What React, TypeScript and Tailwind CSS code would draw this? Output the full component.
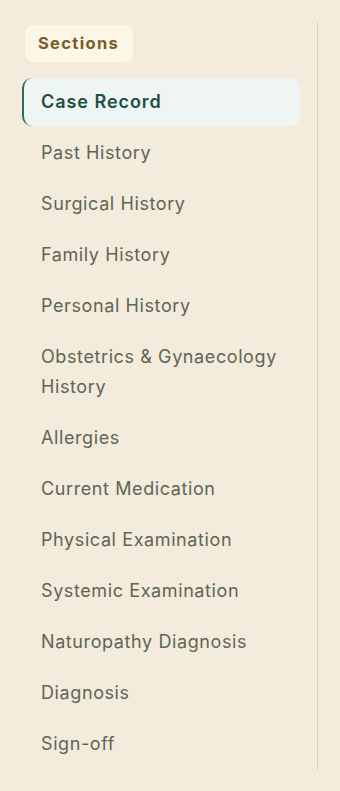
import React from "react";

const items = [
  "Case Record",
  "Past History",
  "Surgical History",
  "Family History",
  "Personal History",
  "Obstetrics & Gynaecology History",
  "Allergies",
  "Current Medication",
  "Physical Examination",
  "Systemic Examination",
  "Naturopathy Diagnosis",
  "Diagnosis",
  "Sign-off",
];

export default function App() {
  return (
    <div className="min-h-[791px] w-[340px] bg-[#f3ebdb] pt-[22px] font-['Inter',sans-serif]">
      <aside className="w-[318px] border-r border-[#d9d0bf] pl-[22px] pr-[17px] pt-[3px] pb-[2px]">
        <div className="ml-[3px] inline-flex h-[37px] items-center rounded-lg bg-[#fcf6e7] pl-[13px] pr-[14px] text-[16.5px] font-bold tracking-[0.08em] text-[#7b5a2c]">
          Sections
        </div>
        <nav className="mt-[16px] flex flex-col gap-[3px]">
          {items.map((it, i) => (
            <div
              key={it}
              className={
                i === 0
                  ? "rounded-[10px] border-l-2 border-[#2c6e60] bg-[#eef5f3] py-[9px] pl-[17px] pr-3 text-[18px] leading-[30px] font-semibold tracking-[0.95px] text-[#1d4f44]"
                  : "rounded-[10px] border-l-2 border-transparent py-[9px] pl-[17px] pr-3 text-[18px] leading-[30px] tracking-[0.6px] text-[#5e6656]"
              }
            >
              {it}
            </div>
          ))}
        </nav>
      </aside>
    </div>
  );
}
